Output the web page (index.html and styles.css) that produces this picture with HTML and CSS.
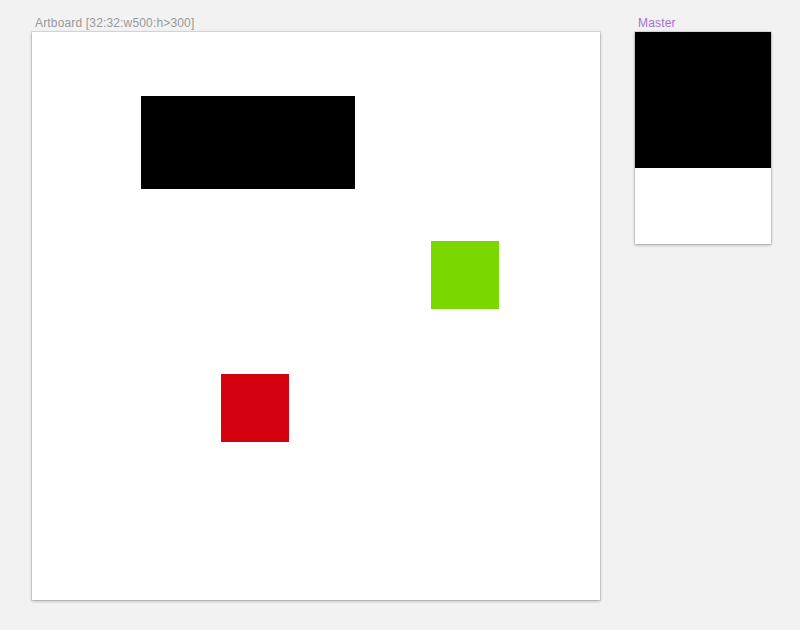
FILE: index.html
```html
<!DOCTYPE html>
<html>
<head>
<meta charset="utf-8">
<link rel="stylesheet" href="styles.css">
</head>
<body>
<div class="canvas">
  <div class="board-col main-col">
    <div class="label">Artboard [32:32:w500:h&gt;300]</div>
    <div class="board main-board">
      <div class="shape black"></div>
      <div class="shape green"></div>
      <div class="shape red"></div>
    </div>
  </div>
  <div class="board-col master-col">
    <div class="label master-label">Master</div>
    <div class="board master-board">
      <div class="master-top"></div>
    </div>
  </div>
</div>
</body>
</html>
```

FILE: styles.css
```css
html, body {
  margin: 0;
  padding: 0;
  background: #f2f2f2;
  width: 800px;
  height: 630px;
  overflow: hidden;
}
.canvas {
  display: flex;
  align-items: flex-start;
  gap: 35px;
  padding-left: 32px;
  padding-top: 16px;
  font-family: "Liberation Sans", Arial, sans-serif;
}
.board-col {
  display: flex;
  flex-direction: column;
}
.label {
  font-size: 12px;
  line-height: 14px;
  height: 16px;
  color: #999999;
  padding-left: 3px;
  letter-spacing: 0.16px;
  white-space: nowrap;
}
.master-label {
  color: #a470d4;
}
.board {
  background: #ffffff;
  box-shadow: 0 0 0 1px rgba(0,0,0,0.08), 0 1px 3px rgba(0,0,0,0.3);
  position: relative;
}
.main-board {
  width: 568px;
  height: 568px;
}
.master-board {
  width: 136px;
  height: 212px;
}
.master-top {
  height: 136px;
  background: #000;
}
.shape {
  position: absolute;
}
.black {
  left: 109px;
  top: 64px;
  width: 214px;
  height: 93px;
  background: #000;
}
.green {
  left: 399px;
  top: 209px;
  width: 68px;
  height: 68px;
  background: #7ad700;
}
.red {
  left: 189px;
  top: 342px;
  width: 68px;
  height: 68px;
  background: #d3000f;
}
```
